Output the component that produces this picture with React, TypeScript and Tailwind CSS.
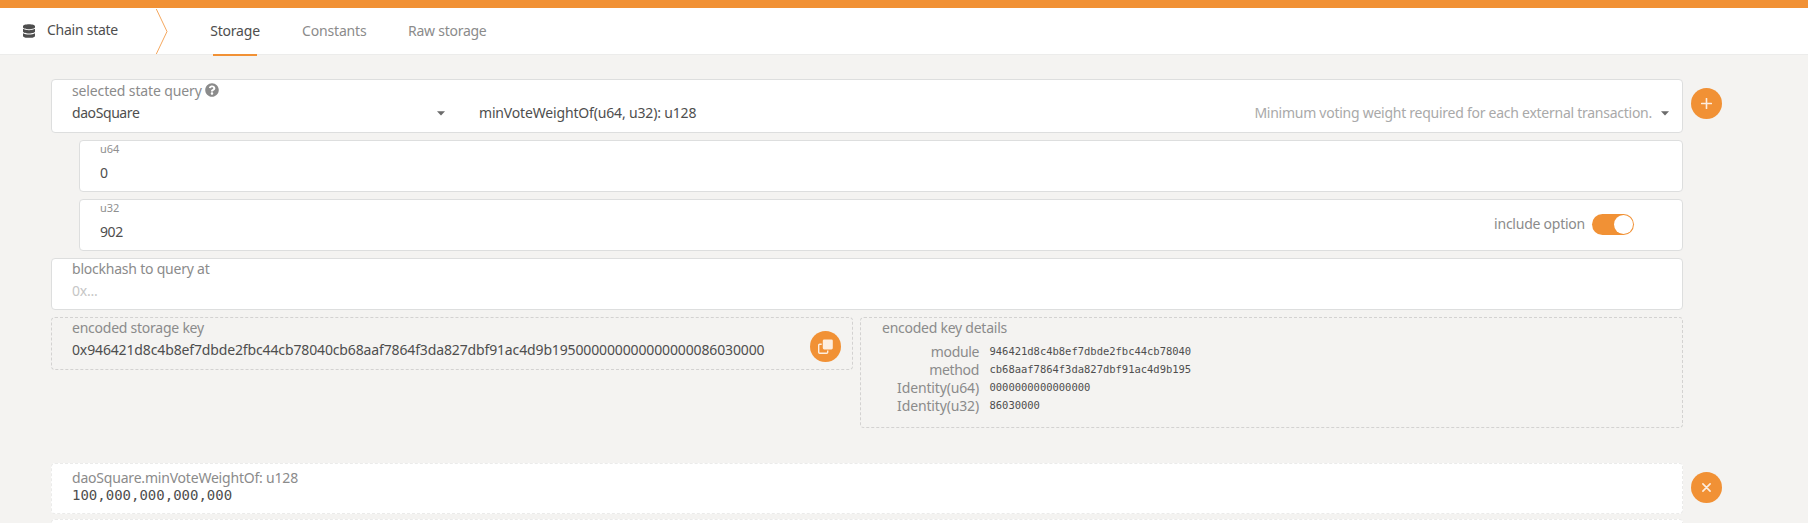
import React from "react";
import { FaDatabase, FaQuestionCircle } from "react-icons/fa";

const LABEL = "block text-[#8b8b8b] leading-5 whitespace-nowrap";
const VALUE = "block text-[#4e4e4e] leading-5 whitespace-nowrap";
const CARD = "rounded-[4px] border border-[#dddede] bg-white";
const DASHED = "rounded-[4px] border border-dashed border-[#d3d2d1]";

function Caret() {
  return (
    <svg width="8" height="5" viewBox="0 0 8 5" className="block fill-[#6b6b6b]">
      <path d="M0 0.2h8L4 4.6z" />
    </svg>
  );
}

function RoundButton({ label, children }: { label: string; children: React.ReactNode }) {
  return (
    <button
      aria-label={label}
      className="flex h-[31px] w-[31px] shrink-0 items-center justify-center rounded-full bg-[#f19135]"
    >
      {children}
    </button>
  );
}

function Header() {
  return (
    <header className="flex h-[47px] items-start border-b border-[#ececeb] bg-white">
      <div className="flex h-full w-[156px] items-start pl-[23px]">
        <FaDatabase className="mt-4 h-[14px] w-3 text-[#4e4e4e]" />
        <span className="mt-3 ml-3 leading-5 tracking-[-0.257px] whitespace-nowrap text-[#4e4e4e]">
          Chain state
        </span>
      </div>
      <svg width="12" height="46" viewBox="0 0 12 46" className="block shrink-0">
        <path d="M0.3 1L11 23.5L0.3 46" fill="none" stroke="#f19135" strokeWidth="0.8" />
      </svg>
      <nav className="flex leading-5 whitespace-nowrap text-[#8b8b8b]">
        <div className="ml-[42px] flex w-[50px] flex-col items-center pt-[13px] text-[#4e4e4e]">
          <span className="tracking-[-0.2px]">Storage</span>
          <i className="mt-[13px] mb-[-2px] block h-[2px] w-[44px] shrink-0 bg-[#f19135]" />
        </div>
        <span className="ml-[42px] w-[64px] pt-[13px] tracking-[-0.166px]">Constants</span>
        <span className="ml-[42px] pt-[13px] tracking-[-0.254px]">Raw storage</span>
      </nav>
    </header>
  );
}

const KEYS = [
  { name: "module", value: "946421d8c4b8ef7dbde2fbc44cb78040", track: "tracking-[-0.35px]" },
  { name: "method", value: "cb68aaf7864f3da827dbf91ac4d9b195", track: "tracking-[-0.35px]" },
  { name: "Identity(u64)", value: "0000000000000000", track: "tracking-[-0.15px]" },
  { name: "Identity(u32)", value: "86030000", track: "tracking-[-0.15px]" },
];

export default function App() {
  return (
    <div className="h-[523px] overflow-hidden bg-[#f4f3f1] font-['Noto_Sans',sans-serif] text-[14px]">
      <div className="h-2 bg-[#f19135]" />
      <Header />

      <main className="pt-6 pl-[51px]">
        <section className="flex items-start gap-2">
          <div className="flex w-[1632px] flex-col gap-[7px]">
            <div className={`${CARD} h-[54px] pt-px pl-5`}>
              <div className="flex items-start">
                <span className={`${LABEL} tracking-[-0.13px]`}>selected state query</span>
                <FaQuestionCircle className="mt-[2px] ml-[3.5px] h-[14px] w-[14px] text-[#8b8b8b]" />
              </div>
              <div className="mt-[2px] flex items-center pr-[13px]">
                <span className={`${VALUE} w-[365px] tracking-[-0.42px]`}>daoSquare</span>
                <Caret />
                <span className={`${VALUE} ml-[34px] tracking-[-0.165px]`}>
                  minVoteWeightOf(u64, u32): u128
                </span>
                <span className="mr-[9px] ml-auto leading-5 tracking-[-0.26px] whitespace-nowrap text-[#a9a9a9]">
                  Minimum voting weight required for each external transaction.
                </span>
                <Caret />
              </div>
            </div>

            <div className={`${CARD} ml-7 h-[52px] pt-px pl-5`}>
              <span className="block text-[11px] leading-[14px] tracking-[-0.05px] text-[#8f8f8f]">u64</span>
              <span className={`${VALUE} mt-[7px] tracking-[-0.3px]`}>0</span>
            </div>

            <div className={`${CARD} ml-7 flex h-[52px] justify-between pt-px pr-12 pl-5`}>
              <div>
                <span className="block text-[11px] leading-[14px] tracking-[-0.05px] text-[#8f8f8f]">u32</span>
                <span className={`${VALUE} mt-[7px] tracking-[-0.4px]`}>902</span>
              </div>
              <div className="flex items-start pt-[13px]">
                <span className={`${LABEL} mr-[7px] tracking-[-0.24px]`}>include option</span>
                <span className="flex h-[21px] w-[42px] items-center justify-end rounded-full bg-[#f19135] pr-px">
                  <i className="block h-[19px] w-[19px] rounded-full bg-white" />
                </span>
              </div>
            </div>

            <div className={`${CARD} h-[52px] pl-5`}>
              <span className={`${LABEL} tracking-[-0.22px]`}>blockhash to query at</span>
              <span className="mt-[2px] block leading-5 tracking-[-0.25px] text-[#c6c6c6]">0x...</span>
            </div>

            <div className="flex items-start gap-[7px]">
              <div className={`${DASHED} flex h-[53px] w-[802px] justify-between pr-[11px] pl-5`}>
                <div>
                  <span className={`${LABEL} tracking-[-0.24px]`}>encoded storage key</span>
                  <span className={`${VALUE} mt-[2px] tracking-[-0.137px]`}>
                    0x946421d8c4b8ef7dbde2fbc44cb78040cb68aaf7864f3da827dbf91ac4d9b195000000000000000086030000
                  </span>
                </div>
                <div className="pt-[13px]">
                  <RoundButton label="Copy">
                    <svg width="15" height="15" viewBox="0 0 15 15" className="block">
                      <rect x="4.8" y="0.4" width="10" height="10" rx="1.4" fill="#fdeee0" />
                      <path
                        d="M3.7 5.2H1.7a1 1 0 0 0-1 1v7a1 1 0 0 0 1 1h7a1 1 0 0 0 1-1v-1.8"
                        fill="none"
                        stroke="#fdeee0"
                        strokeWidth="1.4"
                      />
                    </svg>
                  </RoundButton>
                </div>
              </div>

              <div className={`${DASHED} h-[111px] w-[823px] pl-5`}>
                <span className={`${LABEL} ml-px tracking-[-0.25px]`}>encoded key details</span>
                <div className="mt-[5px]">
                  {KEYS.map((k) => (
                    <div key={k.name} className="flex h-[18px] items-start">
                      <span className={`w-[98px] text-right leading-[18px] text-[#8b8b8b] ${k.track}`}>
                        {k.name}
                      </span>
                      <span className="ml-[10.5px] font-['DejaVu_Sans_Mono',monospace] text-[10.5px] leading-4 tracking-[-0.02px] text-[#4e4e4e]">
                        {k.value}
                      </span>
                    </div>
                  ))}
                </div>
              </div>
            </div>
          </div>
          <div className="pt-[9px]">
            <RoundButton label="Add query">
              <svg width="11" height="11" viewBox="0 0 11 11" className="block">
                <path d="M5.5 0.6v9.8M0.6 5.5h9.8" stroke="#fdeee0" strokeWidth="1.6" strokeLinecap="round" />
              </svg>
            </RoundButton>
          </div>
        </section>

        <section className="mt-[35px] flex items-start gap-2">
          <div className="flex w-[1632px] flex-col gap-[5px]">
            <div className="h-[51px] rounded-[4px] border border-dashed border-[#ebebea] bg-white pt-1 pl-5">
              <span className="block leading-5 tracking-[-0.2px] text-[#8b8b8b]">
                daoSquare.minVoteWeightOf: u128
              </span>
              <span className="mt-[-2px] block font-['DejaVu_Sans_Mono',monospace] leading-[18px] text-[#4e4e4e]">
                100,000,000,000,000
              </span>
            </div>
            <div className="h-[51px] rounded-[4px] border border-dashed border-[#ebebea] bg-white" />
          </div>
          <div className="pt-[9px]">
            <RoundButton label="Remove result">
              <svg width="9" height="9" viewBox="0 0 9 9" className="block">
                <path d="M0.9 0.9l7.2 7.2M8.1 0.9L0.9 8.1" stroke="#fdeee0" strokeWidth="1.6" strokeLinecap="round" />
              </svg>
            </RoundButton>
          </div>
        </section>
      </main>
    </div>
  );
}
